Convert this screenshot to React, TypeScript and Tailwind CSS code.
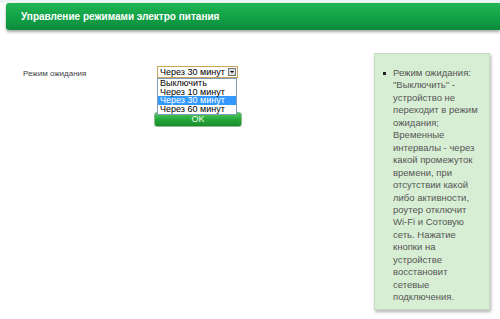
import React from "react";

export default function App() {
  const lines = [
    "Режим ожидания:",
    "\"Выключить\" -",
    "устройство не",
    "переходит в режим",
    "ожидания;",
    "Временные",
    "интервалы - через",
    "какой промежуток",
    "времени, при",
    "отсутствии какой",
    "либо активности,",
    "роутер отключит",
    "Wi-Fi и Сотовую",
    "сеть. Нажатие",
    "кнопки на",
    "устройстве",
    "восстановит",
    "сетевые",
    "подключения.",
  ];
  return (
    <div className="w-[500px] h-[319px] bg-white overflow-hidden relative" style={{ fontFamily: "'Liberation Sans', Arial, sans-serif" }}>
      <div className="h-[3px] bg-[#eef3f3]" />
      <div className="ml-[6px] h-[27px] rounded-l-[3px] bg-gradient-to-b from-[#1fb553] via-[#12a347] to-[#0c8b3b] shadow-[0_2px_3px_rgba(0,0,0,0.35)] flex items-center pl-[15px]">
        <span className="text-white font-bold text-[10px]">Управление режимами электро питания</span>
      </div>
      <div className="flex mt-[23px]">
        <div className="w-[374px] flex pt-[14px]">
          <div className="w-[157px] shrink-0 pl-[23px] text-[8px] text-[#444] leading-[11px] pt-[1px]">
            Режим ожидания
          </div>
          <div className="relative w-[90px] shrink-0 flex flex-col">
            <div className="w-[81px] h-[12px] border border-[#c8a458] bg-white flex items-center justify-between pl-[2px] pr-[1px] -mt-[1px]">
              <span className="text-[9px] text-black leading-[9px] whitespace-nowrap">Через 30 минут</span>
              <span className="w-[8px] h-[8px] bg-[#dcdcdc] border border-[#777] flex items-center justify-center">
                <span className="w-0 h-0 border-l-[2px] border-r-[2px] border-t-[2.5px] border-l-transparent border-r-transparent border-t-black" />
              </span>
            </div>
            <div className="-ml-[3px] mt-[34px] w-[88px] h-[15px] rounded-[3px] bg-gradient-to-b from-[#4cc85e] via-[#25a83a] to-[#1a8d2c] border border-[#8fb890] flex items-center justify-center text-[#eef8ee] text-[9px]">
              OK
            </div>
            <div className="absolute left-0 top-[11px] w-[80px] border border-[#7f9db9] bg-white text-[9px] leading-[8.7px] text-black">
              <div className="pl-[2px] whitespace-nowrap">Выключить</div>
              <div className="pl-[2px] whitespace-nowrap">Через 10 минут</div>
              <div className="pl-[2px] whitespace-nowrap bg-[#3399ff] text-white">Через 30 минут</div>
              <div className="pl-[2px] whitespace-nowrap">Через 60 минут</div>
            </div>
          </div>
        </div>
        <div className="w-[116px] h-[257px] bg-[#d8eed4] border border-[#c6dcc2] shadow-[1px_2px_3px_rgba(0,0,0,0.3)] pl-[8px] pt-[13px]">
          <div className="flex text-[9.5px] leading-[12.45px] text-[#555]">
            <span className="w-[10px] pt-[5px]"><span className="block w-[3px] h-[3px] bg-[#222]" /></span>
            <div>
              {lines.map((l, i) => (
                <div key={i} className="whitespace-nowrap">{l}</div>
              ))}
            </div>
          </div>
        </div>
      </div>
    </div>
  );
}
